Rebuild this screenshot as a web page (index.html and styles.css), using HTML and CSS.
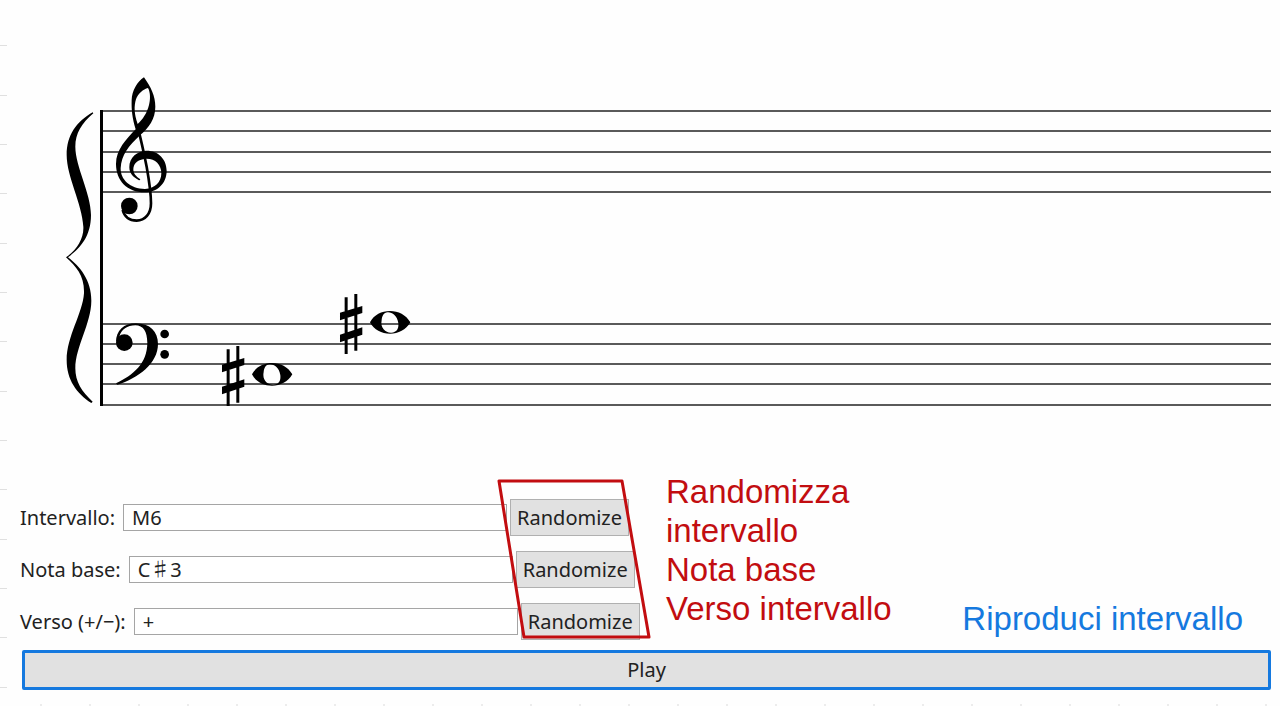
FILE: index.html
```html
<!DOCTYPE html>
<html lang="it">
<head>
<meta charset="utf-8">
<title>Intervalli</title>
<link rel="stylesheet" href="styles.css">
</head>
<body>
<main class="app">
  <svg class="score" role="img" aria-label="Grand staff">
    <g class="staff">
      <line x1="101" x2="100%" y1="111" y2="111"/>
      <line x1="101" x2="100%" y1="131" y2="131"/>
      <line x1="101" x2="100%" y1="152" y2="152"/>
      <line x1="101" x2="100%" y1="172" y2="172"/>
      <line x1="101" x2="100%" y1="192" y2="192"/>
      <line x1="101" x2="100%" y1="324" y2="324"/>
      <line x1="101" x2="100%" y1="344" y2="344"/>
      <line x1="101" x2="100%" y1="364" y2="364"/>
      <line x1="101" x2="100%" y1="384" y2="384"/>
      <line x1="101" x2="100%" y1="405" y2="405"/>
    </g>
    <rect x="100" y="110" width="3" height="296"/>
    <g transform="translate(50 60) scale(.3333)">
      <path d="M128 157C80 185 50 225 50 285C50 350 96 430 100 500C102 535 80 570 48 592C80 620 104 650 102 700C98 760 50 830 50 900C50 960 80 1000 124 1029L128 1025C95 995 76 965 76 925C76 860 124 790 124 722C124 660 90 620 54 592C90 565 123 530 123 465C123 400 76 320 76 260C76 220 95 190 130 160Z"/>
      <path fill-rule="evenodd" d="M282 52C303 82 316 108 316 140C316 178 296 203 270 226C236 258 214 285 212 325C211 358 240 387 285 387C315 386 334 366 334 340C334 314 316 296 290 296C266 297 250 309 250 328C250 341 258 349 270 357Q273 361 267 361C250 352 238 341 238 322C238 292 262 272 290 272C325 272 350 298 350 332C350 370 322 397 284 397C232 397 198 362 198 312C198 270 228 238 257 208C247 175 244 150 245 120C246 92 262 65 282 52ZM263 192C252 160 252 138 258 118C264 100 280 88 294 84C302 98 301 120 297 135C291 160 278 178 263 192Z"/>
      <path class="stem" d="M264 205C276 250 282 280 290 320C298 365 303 395 303 430C303 462 285 482 260 482C240 482 224 472 218 450"/>
      <circle cx="238" cy="438" r="25"/>
    </g>
    <g transform="translate(50 220) scale(.3333)">
      <circle cx="223" cy="368" r="25"/>
      <path d="M198 368C198 330 222 310 258 310C300 310 324 335 324 372C324 430 265 475 202 494L198 490C250 465 292 430 292 368C292 335 280 316 256 316C232 316 214 328 208 350Z"/>
      <circle cx="344" cy="342" r="13"/>
      <circle cx="344" cy="403" r="13"/>
    </g>
    <defs>
      <g id="sharp-note">
        <path d="M434 52h9v170h-9zM463 42h9v170h-9zM420 98L487 78V99L420 121ZM420 164L487 142V164L420 187Z"/>
        <path fill-rule="evenodd" d="M510 127C522 104 545 93 570 93S618 104 631 127C618 150 595 161 570 161S522 150 510 127ZM545 121C540 145 558 159 574 158C590 157 597 147 595 129C592 107 576 96 563 97C551 98 546 108 545 121Z"/>
      </g>
    </defs>
    <use href="#sharp-note" transform="translate(200 280) scale(.3333)"/>
    <use href="#sharp-note" transform="translate(82 332) scale(.3333)"/>
  </svg>

  <form class="controls">
    <div class="settings">
      <div class="rows">
        <div class="row">
          <label for="interval">Intervallo:</label>
          <input id="interval" type="text" value="M6">
          <button type="button">Randomize</button>
        </div>
        <div class="row">
          <label for="root">Nota base:</label>
          <input id="root" type="text" value="C♯3">
          <button type="button">Randomize</button>
        </div>
        <div class="row">
          <label for="direction">Verso (+/−):</label>
          <input id="direction" type="text" value="+">
          <button type="button">Randomize</button>
        </div>
        <svg class="outline" viewBox="0 0 154 160" aria-hidden="true"><path d="M3 2H126L153 158H28Z"/></svg>
      </div>
      <p class="note note-random">Randomizza<br>intervallo<br>Nota base<br>Verso intervallo</p>
      <p class="note note-play">Riproduci intervallo</p>
    </div>
    <button class="play" type="button">Play</button>
  </form>
</main>
</body>
</html>
```
FILE: styles.css
```css
* { box-sizing: border-box; }

body {
  margin: 0;
  background: #fefefe;
  color: #222;
  font: 20px/28px "Noto Sans", "Noto Sans CJK JP", sans-serif;
}

.app {
  min-height: 100vh;
  padding-right: 9px;
  background:
    linear-gradient(to bottom, transparent 45px, #e0e0e0 45px 46px, transparent 46px 95px, #e0e0e0 95px 96px, transparent 96px 144px, #e0e0e0 144px 145px, transparent 145px) 0 0 / 7px 148px repeat-y,
    linear-gradient(to right, transparent 40px, #ececec 40px 42px, transparent 42px) 0 100% / 49px 2px repeat-x;
}

.score {
  display: block;
  width: 100%;
  height: 472px;
  fill: #000;
}

.staff { stroke: #5a5a5a; stroke-width: 2; }

.stem { fill: none; stroke: #000; stroke-width: 8; }

.settings {
  display: flex;
  padding: 0 0 10px 20px;
}

.rows {
  position: relative;
  display: flex;
  flex: none;
  flex-direction: column;
  gap: 15px;
  width: 620px;
  padding-top: 27px;
}

.row {
  display: flex;
  align-items: center;
}

.row > * { flex: none; }

.row label {
  margin-right: 8px;
  white-space: nowrap;
}

.row input {
  width: 384px;
  height: 27px;
  padding: 0 8px;
  border: 1px solid #a5a5a5;
  background: #fff;
  color: inherit;
  font: inherit;
}

.row button {
  width: 119px;
  height: 37px;
  margin-left: 3px;
  padding: 0;
  border: 1px solid #b0b0b0;
  background: #e1e1e1;
  color: inherit;
  font: inherit;
}

.outline {
  position: absolute;
  top: 7px;
  left: 476px;
  width: 154px;
  height: 160px;
  overflow: visible;
  fill: none;
  stroke: #c20d10;
  stroke-width: 3;
  stroke-linejoin: round;
  pointer-events: none;
}

.note {
  margin: 0;
  font: 33px/39px "Liberation Sans", Arial, sans-serif;
  white-space: nowrap;
}

.note-random {
  margin-left: 26px;
  color: #c20d10;
}

.note-play {
  align-self: flex-end;
  margin-left: auto;
  margin-right: 28px;
  padding-bottom: 2px;
  color: #1579df;
}

.play {
  display: block;
  width: calc(100% - 22px);
  height: 40px;
  margin-left: 22px;
  border: 3px solid #1579df;
  border-radius: 2px;
  background: #e1e1e1;
  color: inherit;
  font: inherit;
}
```
